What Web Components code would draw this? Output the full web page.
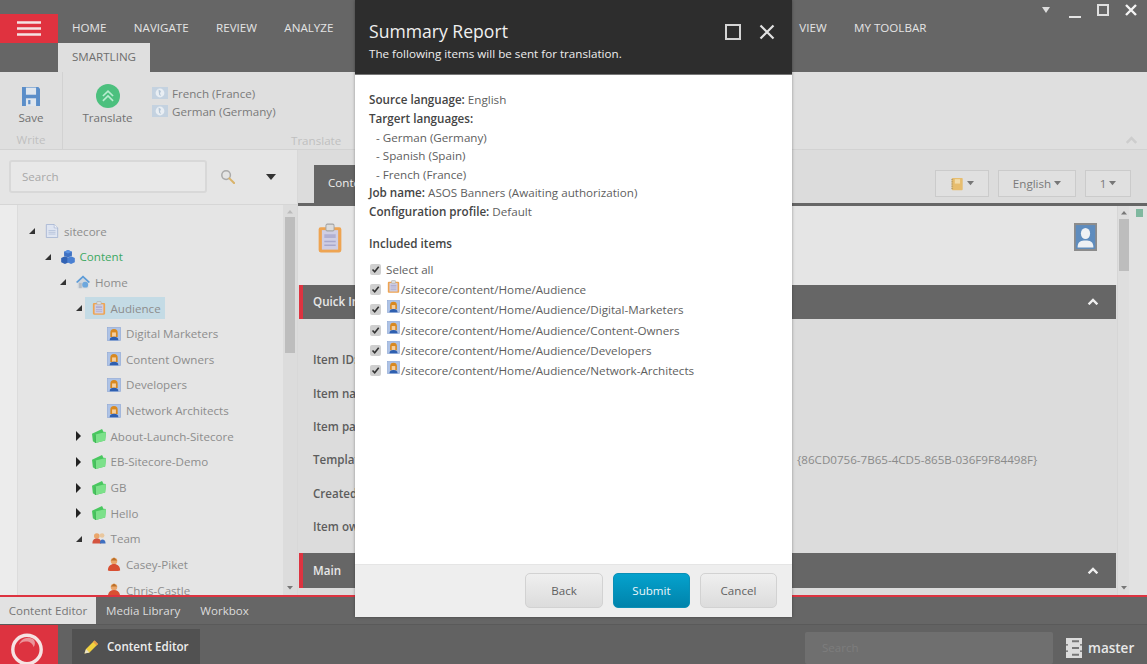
<!DOCTYPE html>
<html lang="en">
<head>
<meta charset="utf-8">
<title>Summary Report</title>
<style>
html,body{margin:0;padding:0;height:664px;overflow:hidden;background:#666;font-family:"Open Sans","Liberation Sans",sans-serif;font-size:11.6px;}
</style>
</head>
<body>
<sc-app>
  <sc-topbar slot="top"></sc-topbar>
  <sc-ribbon slot="ribbon"></sc-ribbon>
  <sc-sidebar slot="side">
    <sc-node level="0" state="open" icon="doc">sitecore</sc-node>
    <sc-node level="1" state="open" icon="cubes" green>Content</sc-node>
    <sc-node level="2" state="open" icon="home">Home</sc-node>
    <sc-node level="3" state="open" icon="clip" selected>Audience</sc-node>
    <sc-node level="4" icon="persona">Digital Marketers</sc-node>
    <sc-node level="4" icon="persona">Content Owners</sc-node>
    <sc-node level="4" icon="persona">Developers</sc-node>
    <sc-node level="4" icon="persona">Network Architects</sc-node>
    <sc-node level="3" state="closed" icon="folder">About-Launch-Sitecore</sc-node>
    <sc-node level="3" state="closed" icon="folder">EB-Sitecore-Demo</sc-node>
    <sc-node level="3" state="closed" icon="folder">GB</sc-node>
    <sc-node level="3" state="closed" icon="folder">Hello</sc-node>
    <sc-node level="3" state="open" icon="team">Team</sc-node>
    <sc-node level="4" icon="user">Casey-Piket</sc-node>
    <sc-node level="4" icon="user">Chris-Castle</sc-node>
  </sc-sidebar>
  <sc-editor slot="main">
    <sc-bar>Quick Info</sc-bar>
    <sc-fields>
      <sc-field label="Item ID:"></sc-field>
      <sc-field label="Item name:"></sc-field>
      <sc-field label="Item path:"></sc-field>
      <sc-field label="Template:" value="{86CD0756-7B65-4CD5-865B-036F9F84498F}"></sc-field>
      <sc-field label="Created:"></sc-field>
      <sc-field label="Item owner:"></sc-field>
    </sc-fields>
    <sc-bar tall>Main</sc-bar>
  </sc-editor>
  <sc-tabs slot="tabs"></sc-tabs>
  <sc-taskbar slot="task"></sc-taskbar>
  <sc-modal slot="modal">
    <sc-line><b>Source language:</b> English</sc-line>
    <sc-line><b>Targert languages:</b></sc-line>
    <sc-line sub>- German (Germany)</sc-line>
    <sc-line sub>- Spanish (Spain)</sc-line>
    <sc-line sub>- French (France)</sc-line>
    <sc-line><b>Job name:</b> ASOS Banners (Awaiting authorization)</sc-line>
    <sc-line><b>Configuration profile:</b> Default</sc-line>
    <sc-line heading><b>Included items</b></sc-line>
    <sc-item>Select all</sc-item>
    <sc-item icon="clip">/sitecore/content/Home/Audience</sc-item>
    <sc-item icon="persona">/sitecore/content/Home/Audience/Digital-Marketers</sc-item>
    <sc-item icon="persona">/sitecore/content/Home/Audience/Content-Owners</sc-item>
    <sc-item icon="persona">/sitecore/content/Home/Audience/Developers</sc-item>
    <sc-item icon="persona">/sitecore/content/Home/Audience/Network-Architects</sc-item>
    <sc-btn slot="actions" w="78">Back</sc-btn>
    <sc-btn slot="actions" w="77" primary>Submit</sc-btn>
    <sc-btn slot="actions" w="77">Cancel</sc-btn>
  </sc-modal>
</sc-app>
<script>
const ICONS = {
  save:`<path d="M0 0h14.500L16 1.500V16H0z" fill="#5b8ec9"/><rect x="3.500" y="0.500" width="9" height="6" fill="#dfe6ee"/><rect x="3.500" y="9.500" width="9" height="6.500" fill="#dfe6ee"/><rect x="5.500" y="11" width="2" height="3.500" fill="#5b8ec9"/>`,
  translate:`<circle cx="8" cy="8" r="8" fill="#4cc07e"/><path d="M4.600 8 8 4.800 11.400 8M4.600 11.200 8 8l3.400 3.200" fill="none" stroke="#b9ecd0" stroke-width="1.100"/>`,
  flag:`<rect width="16" height="12" y="2" fill="#c4d2e0"/><circle cx="8" cy="8" r="4.400" fill="#e9eef3"/><path d="M6.500 4.500 9 6 8 8.500 9 11 7.200 10 6.800 7.500z" fill="#b4c5d6"/>`,
  lens:`<circle cx="6.500" cy="6.500" r="4.600" fill="#e4e4e4" stroke="#aaa" stroke-width="1.600"/><path d="M10 10l5 5" stroke="#d9b36a" stroke-width="2.200" stroke-linecap="round"/>`,
  doc:`<path d="M1.500 .5h9l4 4V15.500h-13z" fill="#dfe5f1" stroke="#a6b5d2" stroke-width="1"/><path d="M10.500 .5v4h4" fill="#f2f4f9" stroke="#a6b5d2" stroke-width=".8"/><path d="M4 7.500h8M4 9.500h8M4 11.500h8" stroke="#b4c1da" stroke-width="1"/>`,
  cubes:`<path d="M8 0l4.500 2v4.500L8 8.500 3.500 6.500V2z" fill="#3f72c4"/><path d="M4.500 7l4.300 2v5L4.500 16 .2 14V9z" fill="#3263b4"/><path d="M11.500 7l4.300 2v5l-4.300 2-4.300-2V9z" fill="#4a80d2"/><path d="M3.500 2 8 4l4.500-2L8 0z" fill="#5d93e0"/>`,
  home:`<path d="M8 .5 16 8h-2v7H2V8H0z" fill="#cfd6de"/><path d="M8 .5 16 8l-1.500 1L8 3 1.500 9 0 8z" fill="#5b9bd8"/><circle cx="10.500" cy="11" r="3.400" fill="#6da7dd"/><rect x="3.500" y="9" width="3" height="6" fill="#b3bcc6"/>`,
  clip:`<rect x="1" y="2.200" width="14" height="13.500" rx="1.300" fill="#eea452"/><rect x="3" y="3.800" width="10" height="10.400" fill="#cfcee4"/><rect x="4.500" y="6" width="7" height="2" fill="#b1b0d2"/><path d="M4.500 9.800h7M4.500 11.800h7" stroke="#a9a8cc" stroke-width=".8"/><rect x="5.500" y=".6" width="5" height="3.600" rx=".8" fill="#dcdcdc" stroke="#a4a4a4" stroke-width=".6"/>`,
  persona:`<rect x=".5" y=".5" width="15" height="15" fill="#aec3e6" stroke="#94acd6" stroke-width=".8"/><path d="M3.800 11.500V6.500a4.200 4.200 0 0 1 8.400 0v5z" fill="#d9891f"/><rect x="5.800" y="6.200" width="4.400" height="4.800" fill="#f5cfa0"/><path d="M3 15c0-3 2.200-4 5-4s5 1 5 4z" fill="#2e5fb0"/>`,
  folder:`<path d="M0 5.500 11.500 0 13 3l3 .5-1 9.500L4 16 1 14z" fill="#49c75f"/><path d="M3.800 6.300 16 3.500 15 13 4 16z" fill="#7ce18a"/><path d="M3.800 6.300 4 16" stroke="#2f9f48" stroke-width=".7"/>`,
  team:`<circle cx="5.500" cy="4.500" r="3.200" fill="#eaa66b"/><path d="M.5 13c0-4 2.200-5.500 5-5.500s5 1.500 5 5.500z" fill="#d4543f"/><circle cx="11.500" cy="4" r="2.700" fill="#e9c79e"/><path d="M9 13c0-3 1-4.500 3-4.500s3.500 1.500 3.500 4.500z" fill="#3e6fc0"/>`,
  user:`<circle cx="8" cy="4.500" r="3.700" fill="#eaa66b"/><path d="M4.300 4 8 .6 11.700 4z" fill="#b9702a"/><path d="M1 15.500c0-5 3-7.500 7-7.500s7 2.500 7 7.500c-3 1-11 1-14 0z" fill="#d84f32"/>`,
  pencil:`<path d="M1.500 14.500 3 10 11.500 1.500 15 5l-8.500 8.500z" fill="#f2d23e"/><path d="M1.500 14.500 3 10l3.500 3.500z" fill="#e8e0c8"/><path d="M11.500 1.500 15 5l-1.500 1.500L10 3z" fill="#e89a4a"/>`,
  db:`<path d="M0 0h16v5H14V6h2v4H14v1h2v5H0v-5h2v-1H0V6h2V5H0z" fill="#dcdcdc"/><rect x="6" y="1.800" width="7" height="1.600" fill="#777"/><rect x="6" y="7.200" width="7" height="1.600" fill="#777"/><rect x="6" y="12.600" width="7" height="1.600" fill="#777"/>`,
  note:`<rect x="2" y="1" width="12.500" height="14" rx="1" fill="#e7bd6e"/><rect x="5.500" y="2.500" width="6" height="5" fill="#f2dcab"/><path d="M1.500 3h2M1.500 5.500h2M1.500 8h2M1.500 10.500h2M1.500 13h2" stroke="#a89468" stroke-width="1"/>`,
  portrait:`<rect x=".6" y=".6" width="14.800" height="14.800" fill="#5e8cbe" stroke="#8c8c8c" stroke-width="1.200"/><circle cx="8" cy="6" r="3.200" fill="#eef1f4"/><path d="M2.500 14c0-3.500 2.500-4 5.500-4s5.500.5 5.500 4z" fill="#eef1f4"/>`
};
function svg(name,w,h){
  return `<svg xmlns="http://www.w3.org/2000/svg" width="${w}" height="${h||w}" viewBox="0 0 16 16" preserveAspectRatio="none" style="display:block;flex:none" aria-hidden="true">${ICONS[name]||''}</svg>`;
}
function def(tag,css,html){
  customElements.define(tag,class extends HTMLElement{
    constructor(){super();this.attachShadow({mode:'open'});}
    connectedCallback(){
      if(this._done)return;this._done=true;
      this.shadowRoot.innerHTML=`<style>${css}</style>`+(typeof html==='function'?html(this):html);
    }
  });
}
const caret=(c,s)=>`<svg width="${s}" height="${s*.6}" viewBox="0 0 10 6" style="display:block;flex:none"><path d="M0 0h10L5 6z" fill="${c}"/></svg>`;
const caretUp=(c,s)=>`<svg width="${s}" height="${s*.6}" viewBox="0 0 10 6" style="display:block;flex:none"><path d="M0 6h10L5 0z" fill="${c}"/></svg>`;
const chev=(c,w)=>`<svg width="${w}" height="${w*.65}" viewBox="0 0 12 8" style="display:block;flex:none"><path d="M1.500 6.500 6 2l4.500 4.500" fill="none" stroke="${c}" stroke-width="2.400"/></svg>`;

def('sc-app',`
:host{display:grid;grid-template-rows:72px 78px 445px 2px 28px 39px;width:1147px;height:664px;position:relative;overflow:hidden;color:#777}
.split{display:grid;grid-template-columns:298px 1fr;min-height:0;overflow:hidden}
.red{background:#dd3340}
.over{position:absolute;left:355px;top:0}
`,`<slot name="top"></slot><slot name="ribbon"></slot>
<div class="split"><slot name="side"></slot><slot name="main"></slot></div>
<div class="red"></div><slot name="tabs"></slot><slot name="task"></slot>
<div class="over"><slot name="modal"></slot></div>`);

def('sc-topbar',`
:host{display:block;background:#666;height:72px;color:#e4e4e4;font-size:11.6px}
.r1{display:flex;height:43px}
.ham{width:58px;height:29px;align-self:flex-end;background:#e0323f;display:flex;align-items:center;justify-content:center}
nav{display:flex;align-self:flex-end;height:29px;line-height:28px;padding-left:14px}
nav span{margin-right:27.400px;white-space:nowrap}
nav .gap{margin-right:0;width:438.600px}
.win{margin-left:auto;display:flex;align-items:flex-start;padding:4px 10px 0 0}
.r2{height:29px;padding-left:58px;display:flex}
.tab{background:#dfdfdf;color:#6e6e6e;width:92px;text-align:center;line-height:28px}
`,`<div class="r1">
<div class="ham"><svg width="24" height="15" viewBox="0 0 24 15"><path d="M0 1.500h24M0 7.500h24M0 13.500h24" stroke="#f4e3e3" stroke-width="2.600"/></svg></div>
<nav><span>HOME</span><span>NAVIGATE</span><span>REVIEW</span><span>ANALYZE</span><span class="gap"></span><span>VIEW</span><span>MY TOOLBAR</span></nav>
<div class="win">
<svg width="12" height="9" viewBox="0 0 12 9" style="margin:2px 17px 0 0"><path d="M2 1h8L6 7z" fill="#ddd"/></svg>
<svg width="12" height="14" viewBox="0 0 12 14" style="margin-right:16px"><path d="M0 13h12" stroke="#e4e4e4" stroke-width="2"/></svg>
<svg width="12" height="12" viewBox="0 0 12 12" style="margin-right:16px"><rect x="1" y="1" width="10" height="10" fill="none" stroke="#e0e0e0" stroke-width="2"/></svg>
<svg width="12" height="12" viewBox="0 0 12 12"><path d="M1 1l10 10M11 1 1 11" stroke="#f4f4f4" stroke-width="2.400"/></svg>
</div></div>
<div class="r2"><div class="tab">SMARTLING</div></div>`);

def('sc-ribbon',`
:host{display:flex;height:78px;box-sizing:border-box;background:#dfdfdf;border-bottom:1px solid #d2d2d2;color:#717171;font-size:11.6px}
.g{display:flex;flex-direction:column;box-sizing:border-box}
.g1{width:63px;border-right:1px solid #d2d2d2}
.g2{flex:1}
.top{height:60px;flex:none;display:flex}
.cmd{display:flex;flex-direction:column;align-items:center;padding-top:15px;width:100%}
.cmd .lb{margin-top:3px;line-height:18px;white-space:nowrap}
.tr{width:89px;flex:none;padding-top:12px}
.tr .lb{margin-top:1px}
.langs{padding-top:12px;display:flex;flex-direction:column}
.lang{display:flex;align-items:center;gap:4px;height:18px;color:#7a7a7a;white-space:nowrap}
.glab{line-height:17px;color:#bfbfbf}
.g1 .glab{text-align:center;margin-top:-1px}
.g2 .glab{display:flex;padding-left:228px;align-items:center;justify-content:space-between;padding-right:9px}
`,`<div class="g g1"><div class="top"><div class="cmd">${svg('save',18,19)}<div class="lb">Save</div></div></div><div class="glab">Write</div></div>
<div class="g g2"><div class="top"><div class="cmd tr">${svg('translate',24)}<div class="lb">Translate</div></div>
<div class="langs"><div class="lang">${svg('flag',16)}French (France)</div><div class="lang">${svg('flag',16)}German (Germany)</div></div></div>
<div class="glab"><span>Translate</span>${chev('#cdcdcd',13)}</div></div>`);

def('sc-sidebar',`
:host{display:flex;flex-direction:column;min-height:0;height:445px;overflow:hidden;background:#e5e5e5;box-sizing:border-box;border-right:1px solid #d8d8d8}
.search{height:55px;flex:none;box-sizing:border-box;border-bottom:1px solid #d6d6d6;display:flex;align-items:center;padding:0 0 1px 9px}
.inp{width:198px;height:33px;box-sizing:border-box;border:2px solid #d8d8d8;border-radius:3px;color:#a9a9a9;padding-left:11px;line-height:29px;background:#e8e8e8}
.lens{margin:0 0 0 13px}
.car{margin-left:31px}
.body{flex:1;display:flex;min-height:0}
.gut{width:17px;flex:none;background:#ececec;border-right:1px solid #dcdcdc}
.tree{flex:1;overflow:hidden;padding-top:13.300px;min-width:0}
.sb{width:14px;flex:none;background:#dcdcdc;display:flex;flex-direction:column;align-items:center;padding-top:5px;box-sizing:border-box}
.th{width:10px;height:136px;background:#bdbdbd;margin-top:3px}
.sp{flex:1}
.dn{margin-bottom:5px}
`,`<div class="search"><div class="inp">Search</div><div class="lens">${svg('lens',15)}</div><div class="car">${caret('#333',10)}</div></div>
<div class="body"><div class="gut"></div><div class="tree"><slot></slot></div>
<div class="sb">${caretUp('#bbb',6)}<div class="th"></div><div class="sp"></div><div class="dn">${caret('#777',6)}</div></div></div>`);

def('sc-node',`
:host{display:flex;align-items:center;height:25.650px;font-size:11.6px;color:#8d8d8d;white-space:nowrap}
.arr{width:17px;flex:none;display:flex}
.lab{display:flex;align-items:center;gap:5px;height:22px}
.sel{background:#c4dbe5;margin-left:-6.500px;padding:0 4px 0 6.500px}
.green{color:#3da862}
`,el=>{
  const lv=+el.getAttribute('level')||0, st=el.getAttribute('state');
  let a='';
  if(st==='open')a='<svg width="8" height="8" viewBox="0 0 8 8"><path d="M7 1v6H1z" fill="#333"/></svg>';
  if(st==='closed')a='<svg width="7" height="10" viewBox="0 0 7 10"><path d="M1 0l5 5-5 5z" fill="#222"/></svg>';
  return `<div style="width:${10+15.5*lv}px;flex:none"></div><div class="arr">${a}</div>
  <div class="lab ${el.hasAttribute('selected')?'sel':''} ${el.hasAttribute('green')?'green':''}">${svg(el.getAttribute('icon'),14)}<slot></slot></div>`;
});

def('sc-editor',`
:host{display:flex;flex-direction:column;height:445px;min-width:0;background:#dcdcdc;overflow:hidden}
.hd{height:56px;flex:none;box-sizing:border-box;border-bottom:3px solid #666;display:flex;align-items:flex-end;padding-left:16px;color:#7a7a7a;background:#dcdcdc}
.tab{background:#666;color:#eee;height:38px;line-height:36px;padding:0 14px}
.tools{margin-left:auto;display:flex;gap:9px;padding:0 16px 6px 0}
.tb{height:27px;box-sizing:border-box;border:1px solid #cbcbcb;background:#e0e0e0;display:flex;align-items:center;justify-content:center;gap:3px}
.body{flex:1;display:flex;min-height:0}
.col{width:819px;flex:none;display:flex;flex-direction:column;min-height:0;overflow:hidden}
.head{height:79px;flex:none;background:#e5e5e5;display:flex;align-items:flex-start;justify-content:space-between;padding:17px 20px 0 19px;box-sizing:border-box}
.sb{width:12px;flex:none;background:#dedede;display:flex;flex-direction:column;align-items:center;padding-top:5px;box-sizing:border-box;border-left:1px solid #d6d6d6}
.th{width:10px;height:52px;background:#bdbdbd;margin-top:4px}
.sp{flex:1}
.dn{margin-bottom:5px}
.gut{flex:1;background:#e2e2e2;display:flex;justify-content:flex-end;padding:3px 4px 0 0;box-sizing:border-box}
.dot{width:7px;height:8px;background:#7fb89f}
`,`<div class="hd"><div class="tab">Content</div><div class="tools">
<div class="tb" style="width:54px">${svg('note',14)}${caret('#777',7)}</div>
<div class="tb" style="width:78px">English${caret('#777',7)}</div>
<div class="tb" style="width:46px">1${caret('#777',7)}</div></div></div>
<div class="body"><div class="col"><div class="head">${svg('clip',26,30)}<div>${svg('portrait',23,28)}</div></div><slot></slot></div>
<div class="sb">${caretUp('#777',6)}<div class="th"></div><div class="sp"></div><div class="dn">${caret('#777',6)}</div></div>
<div class="gut"><div class="dot"></div></div></div>`);

def('sc-bar',`
:host{display:flex;flex:none;align-items:center;justify-content:space-between;height:34px;margin:0 1px;box-sizing:border-box;background:#666;border-left:4px solid #dd3340;padding:0 17px 1px 10px;color:#e8e8e8;font-weight:600;font-size:11.6px}
:host([tall]){height:35px;padding-bottom:0}
`,`<slot></slot>${chev('#f0f0f0',12)}`);

def('sc-fields',`:host{display:block;height:234px;flex:none;box-sizing:border-box;padding:24px 0 0 15px;background:#dcdcdc}`,`<slot></slot>`);
def('sc-field',`
:host{display:grid;grid-template-columns:484px 1fr;height:33.400px;align-items:center;font-size:11.6px}
.l{color:#5d5d5d;font-weight:600}.v{color:#8a8a8a;white-space:nowrap}
`,el=>`<div class="l">${el.getAttribute('label')}</div><div class="v">${el.getAttribute('value')||''}</div>`);

def('sc-tabs',`
:host{display:flex;height:28px;background:#666;color:#dcdcdc;font-size:11.6px;line-height:27px;box-sizing:border-box;border-bottom:1px solid #5a5a5a}
.t{white-space:nowrap}
.a{background:#e2e2e2;color:#767676;width:96px;text-align:center;margin-right:10px}
`,`<div class="t a">Content Editor</div><div class="t" style="margin-right:20px">Media Library</div><div class="t">Workbox</div>`);

def('sc-taskbar',`
:host{display:flex;height:39px;background:#626262;overflow:hidden;color:#eee}
.logo{width:58px;height:39px;background:#dd3340;flex:none;overflow:hidden}
.app{margin:4px 0 0 14px;width:128px;height:35px;background:#515151;display:flex;align-items:center;gap:8px;padding-left:11px;box-sizing:border-box;font-weight:600;font-size:11.6px}
.s{margin:7px 0 0 auto;width:248px;height:32px;background:#6f6f6f;border-radius:2px;color:#7d7d7d;line-height:32px;padding-left:17px;box-sizing:border-box}
.m{display:flex;align-items:center;gap:6px;width:94px;box-sizing:border-box;padding:6px 0 0 13px;font-size:13.5px;font-weight:600;color:#e8e8e8}
`,`<div class="logo"><svg width="58" height="39" viewBox="0 0 58 39"><circle cx="27" cy="24.500" r="14.200" fill="none" stroke="#f6e3e3" stroke-width="3.400"/><path d="M19 20a9.500 9.500 0 0 1 14-6c2.500 2 2.500 6 .5 8-.5-4-5-6-8-5.500-3 0-5 1.500-6.500 3.500z" fill="#f6e3e3" opacity=".55"/></svg></div>
<div class="app">${svg('pencil',16)}Content Editor</div><div class="s">Search</div><div class="m">${svg('db',16,20)}master</div>`);

def('sc-modal',`
:host{display:flex;flex-direction:column;width:437px;height:617px;background:#fff;box-shadow:0 0 3px rgba(0,0,0,.35);font-size:11.6px;color:#555}
.hd{height:75px;flex:none;box-sizing:border-box;background:#2d2d2d;color:#f0f0f0;display:flex;justify-content:space-between;padding:18px 17px 0 14px;border-bottom:1px solid #777}
.tt{font-size:17.6px;line-height:26px}
.st{font-size:11.65px;line-height:18px;margin-top:1px;color:#eee}
.ic{display:flex;gap:18px;padding-top:6px}
.bd{flex:1;padding:16.200px 14px 0;min-height:0;overflow:hidden}
.ft{height:53px;flex:none;box-sizing:border-box;background:#eee;border-top:1px solid #e5e5e5;display:flex;justify-content:flex-end;align-items:center;gap:10px;padding:0 15px 2px 0}
`,`<div class="hd"><div><div class="tt">Summary Report</div><div class="st">The following items will be sent for translation.</div></div>
<div class="ic"><svg width="16" height="16" viewBox="0 0 16 16"><rect x="1" y="1" width="14" height="14" fill="none" stroke="#d4d4d4" stroke-width="2"/></svg>
<svg width="16" height="16" viewBox="0 0 16 16"><path d="M1.500 1.500l13 13M14.500 1.500l-13 13" stroke="#e2e2e2" stroke-width="2.200"/></svg></div></div>
<div class="bd"><slot></slot></div><div class="ft"><slot name="actions"></slot></div>`);

def('sc-line',`
:host{display:block;line-height:18.650px;font-size:11.65px;color:#5e5e5e;white-space:nowrap}
:host([sub]){padding-left:7px}
:host([heading]){margin:13.400px 0 5.600px}
::slotted(b){font-weight:600;color:#444}
`,`<slot></slot>`);

def('sc-item',`
:host{display:flex;align-items:center;height:20.200px;font-size:11.65px;color:#5e5e5e;white-space:nowrap}
.cb{margin:0 5px 0 1px}
.ic{margin:-6px 1px 0 1px}
`,el=>{
  const i=el.getAttribute('icon');
  return `<svg class="cb" width="11" height="11" viewBox="0 0 11 11" style="flex:none"><rect width="11" height="11" rx="2" fill="#cfcfcf"/><path d="M2.500 5.500l2.200 2.300 4-5" fill="none" stroke="#333" stroke-width="1.600"/></svg>${i?`<div class="ic">${svg(i,13)}</div>`:''}<slot></slot>`;
});

def('sc-btn',`
:host{display:flex;align-items:center;justify-content:center;height:35px;box-sizing:border-box;border-radius:5px;border:1px solid #d2d2d2;background:linear-gradient(#efefef,#dcdcdc);color:#616161;font-size:11.6px}
:host([primary]){background:linear-gradient(#05a2cd,#0083ab);border-color:#0a8fb6;color:#eaf6fb}
`,el=>{el.style.width=el.getAttribute('w')+'px';return `<slot></slot>`;});
</script>
</body>
</html>
